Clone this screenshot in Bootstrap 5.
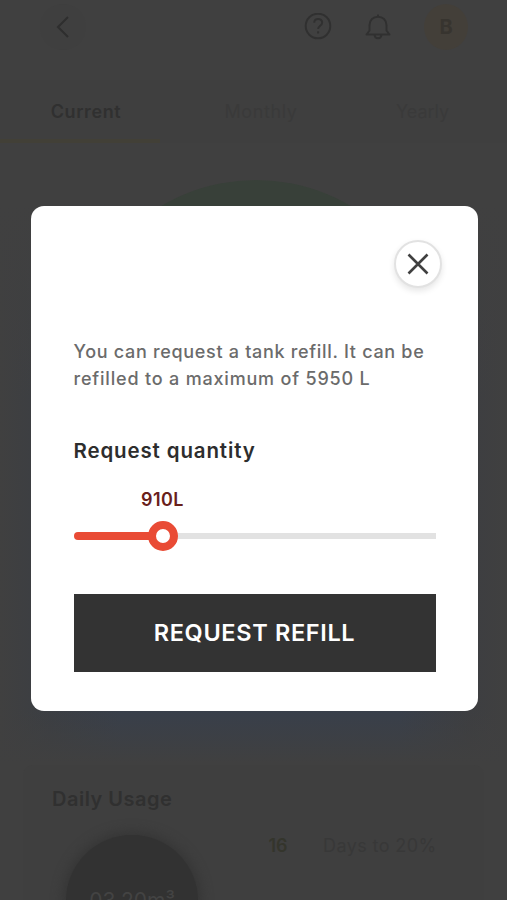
<!DOCTYPE html>
<html lang="en">
<head>
<meta charset="utf-8">
<meta name="viewport" content="width=device-width, initial-scale=1">
<title>Request refill</title>
<link href="https://cdn.jsdelivr.net/npm/bootstrap@5.3.0/dist/css/bootstrap.min.css" rel="stylesheet">
<style>
html, body { height: 900px; overflow: hidden; }
body { background: #404040; font-family: Inter, "Open Sans", sans-serif; color: #323232; }
.screen { height: 900px; }
.topbar { height: 80px; padding: 4px 39px 0 40px; background: #404040; }
.round-btn { width: 46px; height: 46px; background: #3f3f3f; }
.top-icon { margin-right: 32px; }
.avatar { width: 44px; height: 46px; background: #433f39; color: #37342f; font-size: 20px; }
.tabs-row { height: 63px; font-size: 18px; color: #3a3a3a; background: #3f3f3f; }
.tab-first { width: 160px; padding-left: 12px; border-bottom: 4px solid #424037; color: #303030; letter-spacing: .6px; }
.tab-mid { width: 202px; letter-spacing: .6px; }
.tab-last { width: 121px; }
.hero { height: 622px; padding-top: 37px; background: linear-gradient(#404040 60px, rgba(64,64,64,0) 260px, rgba(64,64,64,0) 565px, #404040 620px), linear-gradient(90deg, #404040, #3b3e43 50px, #383f4b 120px, #383f4b 400px, #3d3e41 470px, #404040); }
.tank { width: 370px; height: 370px; background: #384039; margin-left: 4px; }
.usage { height: 140px; margin: 0 23px; padding: 19px 0 0 29px; background: #3f3f3f; border-radius: 10px 10px 0 0; }
.usage-title { font-size: 20px; line-height: 30px; color: #303030; letter-spacing: .5px; }
.gauge { width: 132px; height: 132px; margin: 21px 0 0 14px; background: #323232; box-shadow: 0 0 12px 3px #353535; padding-top: 50px; color: #434343; font-size: 21px; }
.days-num { margin: 15px 0 0 55px; width: 50px; font-size: 18px; line-height: 34px; color: #34352c; }
.days-text { margin: 15px 0 0 20px; font-size: 18px; line-height: 34px; color: #383838; letter-spacing: .4px; }
.refill-dialog { width: 447px; max-width: none; margin: 205.5px 0 0 30.5px; }
.refill-panel { height: 505.5px; border: 0; border-radius: 13px; background: #fff; }
.refill-body { padding: 34px 42px 39px 43px; }
.close-round { width: 48px; height: 48px; margin-right: -6px; border: 2px solid #e2e2e2; background: #fff; box-shadow: 0 3px 6px rgba(0,0,0,.1); }
.refill-note { margin: 50.5px -10px 0 0; font-size: 18px; line-height: 27px; color: #6b6b6b; font-weight: 500; white-space: nowrap; }
.line-one { letter-spacing: .69px; }
.line-two { letter-spacing: .81px; }
.qty-title { margin-top: 44px; font-size: 20.5px; line-height: 30px; font-weight: 600; color: #2d2d2d; letter-spacing: .86px; }
.qty-value { margin: 22px 0 0 67.5px; font-size: 18px; line-height: 24px; font-weight: 600; color: #69201b; letter-spacing: .45px; }
.slider-row { height: 30px; margin-top: 9px; }
.slider-fill { width: 76px; height: 8px; background: #e94b35; border-radius: 4px 0 0 4px; }
.slider-knob { width: 30px; height: 30px; border: 8px solid #e94b35; background: #fff; margin-left: -2px; }
.slider-rest { height: 6px; background: #e2e2e2; }
.refill-btn { height: 78px; margin-top: 43px; border: 0; background: #333; color: #fff; font-size: 23.5px; font-weight: 600; letter-spacing: .65px; }
</style>
<script src="https://cdn.jsdelivr.net/npm/bootstrap@5.3.0/dist/js/bootstrap.bundle.min.js"></script>
</head>
<body>
<div class="screen overflow-hidden">
  <header class="topbar d-flex align-items-start">
    <div class="round-btn rounded-circle d-flex align-items-center justify-content-center">
      <svg width="24" height="24" viewBox="0 0 24 24" fill="none" stroke="#2e2e2e" stroke-width="2"><path d="M17 2 7 12l10 10"/></svg>
    </div>
    <div class="d-flex align-items-center ms-auto">
      <svg class="top-icon" width="28" height="28" viewBox="0 0 28 28" fill="none" stroke="#303030" stroke-width="2"><circle cx="14" cy="13" r="12.3"/><path d="M10.2 9.8c0-5 8-5 8-.3 0 3.2-4.1 3.2-4.1 6.5M14.1 18.2v2.3"/></svg>
      <svg class="top-icon" width="28" height="28" viewBox="0 0 28 28" fill="none" stroke="#303030" stroke-width="2" stroke-linejoin="round"><path d="M14 1.5v2.2M2.5 21.6h23l-3-4.1v-5.3c0-5.2-3.7-8.4-8.5-8.4s-8.5 3.2-8.5 8.4v5.3zM10.5 22c.5 4.4 6.5 4.4 7 0"/></svg>
      <div class="avatar rounded-circle d-flex align-items-center justify-content-center fw-bold">B</div>
    </div>
  </header>
  <nav class="tabs-row d-flex text-center">
    <div class="tab-first d-flex align-items-center justify-content-center fw-semibold pt-1">Current</div>
    <div class="tab-mid d-flex align-items-center justify-content-center">Monthly</div>
    <div class="tab-last d-flex align-items-center justify-content-center">Yearly</div>
  </nav>
  <main>
    <section class="hero d-flex flex-column align-items-center">
      <div class="tank rounded-circle flex-shrink-0"></div>
    </section>
    <section class="usage">
      <div class="usage-title fw-semibold">Daily Usage</div>
      <div class="d-flex align-items-start">
        <div class="gauge rounded-circle text-center flex-shrink-0">03.20m³</div>
        <div class="days-num text-center fw-semibold">16</div>
        <div class="days-text">Days to 20%</div>
      </div>
    </section>
  </main>
</div>
<div class="modal show d-block overflow-hidden" tabindex="-1" role="dialog" aria-modal="true">
  <div class="modal-dialog refill-dialog">
    <div class="modal-content refill-panel">
      <div class="refill-body d-flex flex-column">
        <button class="close-round btn rounded-circle p-0 d-flex align-items-center justify-content-center align-self-end" aria-label="Close">
          <svg width="22" height="22" viewBox="0 0 22 22" fill="none" stroke="#404040" stroke-width="2.6"><path d="m1.5 1.5 19 19M20.5 1.5l-19 19"/></svg>
        </button>
        <p class="refill-note"><span class="line-one">You can request a tank refill. It can be</span><br><span class="line-two">refilled to a maximum of 5950 L</span></p>
        <h2 class="qty-title mb-0">Request quantity</h2>
        <div class="qty-value">910L</div>
        <div class="slider-row d-flex align-items-center">
          <div class="slider-fill"></div>
          <div class="slider-knob rounded-circle flex-shrink-0"></div>
          <div class="slider-rest flex-grow-1"></div>
        </div>
        <button class="refill-btn btn rounded-0 w-100">REQUEST REFILL</button>
      </div>
    </div>
  </div>
</div>
</body>
</html>
